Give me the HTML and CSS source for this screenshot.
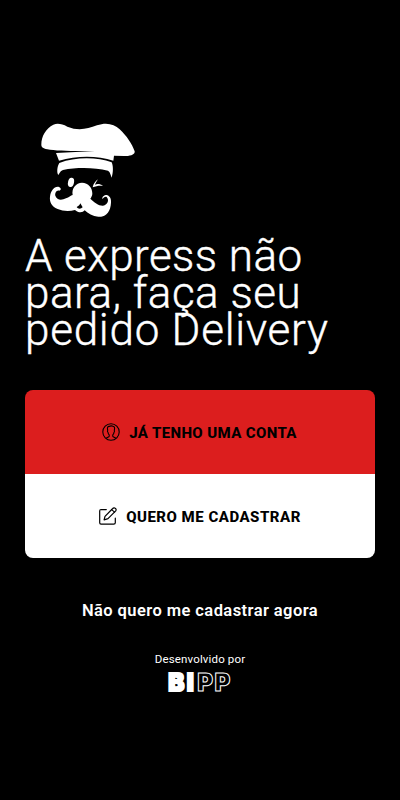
FILE: index.html
```
<!DOCTYPE html>
<html lang="pt-BR">
<head>
<meta charset="utf-8">
<meta name="viewport" content="width=device-width, initial-scale=1">
<title>Delivery</title>
<link rel="stylesheet" href="styles.css">
</head>
<body>
<main class="welcome">
  <svg class="chef" viewBox="30 24 288 285" aria-hidden="true">
    <path fill="#fff" d="M34 89C34 63 48 40 70 29C83 24 96 27 112 35C144 48 172 42 201 31C229 21 253 27 269 43C290 63 306 86 314 109C315 120 299 123 282 123L252 122L250 137C202 121 141 121 87 137L78 114L195 108C133 109 78 108 52 103C38 100 34 96 34 89Z"/>
    <path fill="#fff" d="M88 144C137 125 202 126 245 142C251 156 249 175 245 188C242 181 241 171 234 167C193 157 139 157 99 165C90 168 90 174 85 180C80 173 81 155 88 144Z"/>
    <ellipse cx="123" cy="202" rx="9" ry="14" fill="#fff" transform="rotate(12 123 202)"/>
    <path fill="#fff" d="M204 193C199 200 196 206 195 209C203 206 211 207 219 213C209 211 199 213 188 217C190 207 196 198 204 193Z"/>
    <path fill="#fff" d="M156 203C175 203 188 219 187 237C186 243 184 247 181 251C192 262 207 273 219 272C234 269 238 255 230 246C224 244 221 249 217 252C216 246 222 240 230 240C243 243 245 257 242 272C238 297 222 306 205 305C188 304 174 296 164 286C158 294 145 294 135 285C119 289 99 289 83 282C64 275 58 258 60 245C62 228 73 213 87 216C94 219 94 225 88 227C80 224 74 234 76 242C81 257 96 256 108 250C117 247 122 241 128 240C124 220 138 203 156 203Z"/>
    <path d="M151 265L158 277C152 283 144 282 140 276C145 274 149 270 151 265Z"/>
  </svg>
  <h1 class="headline">
    <span class="line line-one">A express não</span>
    <span class="line line-two">para, faça seu</span>
    <span class="line line-three">pedido Delivery</span>
  </h1>
  <nav class="actions">
    <a class="action action-login">
      <svg class="icon" viewBox="0 0 18 18" fill="none" stroke="currentColor" stroke-width="1.1" stroke-linejoin="round" aria-hidden="true">
        <circle cx="9" cy="9" r="8.2"/>
        <path d="M4 15.2L6.8 13.8Q7.6 13.2 7.2 11.8Q6.2 10.9 5.9 9.1Q5.1 8.6 5.7 7.3Q4.8 3.4 7.1 3.4Q9 2.4 11 3.2Q13.3 3.8 12.3 7.3Q12.8 8.6 12.1 9.1Q11.8 10.9 10.8 11.8Q10.4 13.2 11.2 13.8L14 15.2"/>
      </svg>
      <span class="action-label">JÁ TENHO UMA CONTA</span>
    </a>
    <a class="action action-signup">
      <svg class="icon" viewBox="0 0 18 18" fill="none" stroke="currentColor" stroke-width="1.2" stroke-linecap="round" stroke-linejoin="round" aria-hidden="true">
        <path d="M7.3 2.6H2Q.7 2.6.7 4V15.8Q.7 17.2 2 17.2H14.7Q16.3 17.2 16.3 15.8V11.2"/>
        <path d="M6 9.4L13.7 1.5Q14.7.4 15.9 1.1Q17.8 2 16.7 3.9L9 11.7L5.1 12.8Z"/>
        <path d="M12.6 2.6L15.6 5.1"/>
      </svg>
      <span class="action-label">QUERO ME CADASTRAR</span>
    </a>
  </nav>
  <a class="skip">Não quero me cadastrar agora</a>
  <footer class="credit">
    <span class="credit-label">Desenvolvido por</span>
    <span class="brand"><span class="brand-solid">BI</span><span class="brand-outline">PP</span></span>
  </footer>
</main>
</body>
</html>
```
FILE: styles.css
```
* { box-sizing: border-box; }
body {
  margin: 0;
  background: #000;
  color: #fff;
  font-family: Roboto, "Liberation Sans", sans-serif;
}
.welcome {
  min-height: 800px;
  padding: 123px 25px 0;
  display: flex;
  flex-direction: column;
}
.chef {
  width: 96px;
  height: 95px;
  margin-left: 15px;
}
.headline {
  margin: 20px 0 0;
  font-size: 44px;
  font-weight: 300;
  line-height: 37px;
  -webkit-text-stroke: .4px #fff;
}
.line {
  display: block;
  white-space: nowrap;
}
.line-one { letter-spacing: .45px; }
.line-two { letter-spacing: .5px; }
.line-three { letter-spacing: .75px; }
.actions {
  margin-top: 41px;
  border-radius: 8px;
  overflow: hidden;
}
.action {
  height: 84px;
  display: flex;
  align-items: center;
  justify-content: center;
  gap: 9px;
  color: #000;
  font-size: 15px;
  font-weight: 800;
  line-height: 20px;
  white-space: nowrap;
}
.action-label { padding-top: 2px; }
.action-login {
  background: #dc1e1e;
  letter-spacing: .37px;
  padding-right: 1px;
}
.action-signup {
  background: #fff;
  letter-spacing: .5px;
}
.icon {
  width: 18px;
  height: 18px;
  flex: none;
}
.skip {
  margin-top: 43px;
  text-align: center;
  font-size: 16.5px;
  font-weight: 600;
  letter-spacing: .43px;
  line-height: 20px;
  white-space: nowrap;
}
.credit {
  margin-top: 31px;
  display: flex;
  flex-direction: column;
  align-items: center;
}
.credit-label {
  font-size: 11.5px;
  letter-spacing: .15px;
  line-height: 14px;
}
.brand {
  margin-top: 7px;
  display: flex;
  gap: 1px;
  font-family: Inter, sans-serif;
  font-size: 24px;
  line-height: 20px;
}
.brand-solid {
  font-weight: 900;
  letter-spacing: 2.5px;
  -webkit-text-stroke: 2px #fff;
}
.brand-outline {
  color: #000;
  font-weight: 900;
  letter-spacing: 1.5px;
  -webkit-text-stroke: 1px #fff;
}
```
